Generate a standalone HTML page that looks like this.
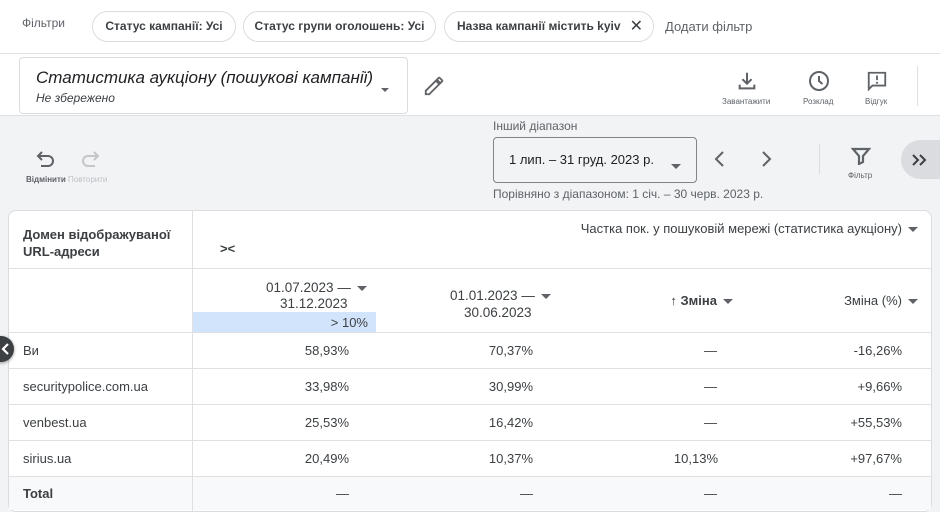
<!DOCTYPE html>
<html><head><meta charset="utf-8"><style>
*{margin:0;padding:0;box-sizing:border-box}
body{width:940px;height:511px;overflow:hidden;background:#f1f3f4;font-family:"Liberation Sans",Roboto,sans-serif;color:#3c4043;position:relative;font-size:13px}
.a{position:absolute;white-space:nowrap}
.chip{position:absolute;top:11px;height:31px;border:1px solid #dadce0;border-radius:16px;background:#fff;font-size:12px;font-weight:bold;color:#3c4043;line-height:29px;text-align:center;white-space:nowrap}
.r{text-align:right}
.line{position:absolute;background:#e0e0e0}
.tri{display:inline-block;width:0;height:0;border-left:5px solid transparent;border-right:5px solid transparent;border-top:5px solid #5f6368;vertical-align:middle;margin-left:6px}
</style></head><body>
<div class="a" style="left:0;top:0;width:940px;height:116px;background:#fff"></div>
<div class="line" style="left:0;top:53px;width:940px;height:1px"></div>
<div class="line" style="left:0;top:115px;width:940px;height:1px"></div>
<div class="a" style="left:22px;top:16px;font-size:12px;color:#5f6368">Фільтри</div>
<div class="chip" style="left:92px;width:144px">Статус кампанії: Усі</div>
<div class="chip" style="left:243px;width:193px">Статус групи оголошень: Усі</div>
<div class="chip" style="left:444px;width:210px;text-align:left;padding-left:12px">Назва кампанії містить kyiv <span style="font-weight:normal;font-size:16px;position:absolute;right:10px;top:0">✕</span></div>
<div class="a" style="left:665px;top:19px;color:#5f6368">Додати фільтр</div>

<div class="a" style="left:19px;top:57px;width:389px;height:57px;border:1px solid #dadce0;border-radius:4px;background:#fff"></div>
<div class="a" style="left:36px;top:68px;font-size:17px;font-style:italic;color:#202124">Статистика аукціону (пошукові кампанії)</div>
<div class="a" style="left:36px;top:91px;font-size:12px;font-style:italic;color:#3c4043">Не збережено</div>
<div class="a" style="left:381px;top:81px"><span class="tri" style="margin:0;border-width:4px 4px 0 4px"></span></div>
<svg class="a" style="left:423px;top:75px" width="22" height="22" viewBox="0 0 24 24"><path d="M3 17.25V21h3.75L17.8 9.94l-3.75-3.75L3 17.25zM20.7 7.04a1 1 0 000-1.41l-2.34-2.34a1 1 0 00-1.41 0l-1.830 1.83 3.75 3.75 1.83-1.83z" fill="none" stroke="#5f6368" stroke-width="2"/></svg>

<svg class="a" style="left:736px;top:70px" width="22" height="22" viewBox="0 0 24 24"><path d="M12 3v11M7 10l5 5 5-5M4 16v4h16v-4" fill="none" stroke="#5f6368" stroke-width="2.2"/></svg>
<div class="a" style="left:722px;top:97px;font-size:8px;color:#5f6368">Завантажити</div>
<svg class="a" style="left:807px;top:69px" width="24" height="24" viewBox="0 0 24 24"><circle cx="12" cy="12" r="9" fill="none" stroke="#5f6368" stroke-width="2"/><path d="M12 7v5l3.5 3" fill="none" stroke="#5f6368" stroke-width="2"/></svg>
<div class="a" style="left:803px;top:97px;font-size:8px;color:#5f6368">Розклад</div>
<svg class="a" style="left:866px;top:70px" width="22" height="22" viewBox="0 0 24 24"><path d="M3 3h18v14H7l-4 4z" fill="none" stroke="#5f6368" stroke-width="2"/><path d="M12 6v5M12 13v2" stroke="#5f6368" stroke-width="2"/></svg>
<div class="a" style="left:865px;top:97px;font-size:8px;color:#5f6368">Відгук</div>
<div class="line" style="left:917px;top:66px;width:1px;height:40px"></div>

<svg class="a" style="left:36px;top:150px" width="20" height="18" viewBox="0 0 20 18"><path d="M6 2L2 6l4 4M2 6h10a5 5 0 010 10H5" fill="none" stroke="#5f6368" stroke-width="2"/></svg>
<svg class="a" style="left:80px;top:150px" width="20" height="18" viewBox="0 0 20 18"><path d="M14 2l4 4-4 4M18 6H8a5 5 0 000 10h7" fill="none" stroke="#c4c7c9" stroke-width="2"/></svg>
<div class="a" style="left:26px;top:175px;font-size:8px;color:#5f6368;font-weight:bold">Відмінити <span style="color:#bdc1c6;font-weight:normal">Повторити</span></div>

<div class="a" style="left:493px;top:119px;font-size:12px;color:#5f6368">Інший діапазон</div>
<div class="a" style="left:493px;top:137px;width:204px;height:46px;border:1px solid #80868b;border-radius:4px"></div>
<div class="a" style="left:509px;top:152px;font-size:13px;color:#202124">1 лип. – 31 груд. 2023 р.</div>
<div class="a" style="left:671px;top:158px"><span class="tri" style="margin:0"></span></div>
<div class="a" style="left:493px;top:187px;font-size:12px;color:#5f6368">Порівняно з діапазоном: 1 січ. – 30 черв. 2023 р.</div>
<svg class="a" style="left:712px;top:150px" width="16" height="18" viewBox="0 0 16 18"><path d="M11 2L4 9l7 7" fill="none" stroke="#5f6368" stroke-width="2"/></svg>
<svg class="a" style="left:758px;top:150px" width="16" height="18" viewBox="0 0 16 18"><path d="M5 2l7 7-7 7" fill="none" stroke="#5f6368" stroke-width="2"/></svg>
<div class="line" style="left:819px;top:144px;width:1px;height:30px;background:#dadce0"></div>
<svg class="a" style="left:851px;top:147px" width="20" height="18" viewBox="0 0 20 18"><path d="M2 2h16l-6 7v6l-4 2V9z" fill="none" stroke="#5f6368" stroke-width="2.2"/></svg>
<div class="a" style="left:848px;top:171px;font-size:8px;color:#5f6368">Фільтр</div>
<div class="a" style="left:901px;top:140px;width:60px;height:39px;border-radius:20px;background:#dadce0"></div>
<svg class="a" style="left:911px;top:153px" width="16" height="14" viewBox="0 0 16 14"><path d="M2 2l5 5-5 5M9 2l5 5-5 5" fill="none" stroke="#3c4043" stroke-width="2"/></svg>

<div class="a" style="left:8px;top:210px;width:924px;height:302px;background:#fff;border:1px solid #dadce0;border-radius:8px"></div>
<div class="line" style="left:192px;top:210px;width:1px;height:301px"></div>
<div class="line" style="left:8px;top:268px;width:924px;height:1px"></div>
<div class="line" style="left:8px;top:332px;width:924px;height:1px"></div>
<div class="line" style="left:8px;top:368px;width:924px;height:1px"></div>
<div class="line" style="left:8px;top:404px;width:924px;height:1px"></div>
<div class="line" style="left:8px;top:440px;width:924px;height:1px"></div>
<div class="line" style="left:8px;top:476px;width:924px;height:1px"></div>
<div class="a" style="left:9px;top:477px;width:922px;height:33px;background:#f8f9fa"></div>
<div class="line" style="left:192px;top:476px;width:1px;height:35px"></div>

<div class="a" style="left:23px;top:226px;font-size:13px;font-weight:bold;color:#3c4043;line-height:17px">Домен відображуваної<br>URL-адреси</div>
<div class="a" style="left:220px;top:241px;font-size:13px;font-weight:bold">&gt;&lt;</div>
<div class="a r" style="right:22px;top:221px;font-size:13px">Частка пок. у пошуковій мережі (статистика аукціону)<span class="tri"></span></div>

<div class="a" style="left:193px;top:312px;width:183px;height:20px;background:#d2e3fc"></div>
<div class="a" style="left:266px;top:279px;line-height:17px;font-size:13.5px">01.07.2023 —<span class="tri"></span></div>
<div class="a" style="left:280px;top:296px;font-size:13.5px">31.12.2023</div>
<div class="a r" style="right:572px;top:315px;color:#3c4043">&gt; 10%</div>
<div class="a" style="left:450px;top:288px;font-size:13.5px">01.01.2023 —<span class="tri"></span></div>
<div class="a" style="left:464px;top:305px;font-size:13.5px">30.06.2023</div>
<div class="a r" style="right:207px;top:293px;font-weight:bold">↑ Зміна<span class="tri"></span></div>
<div class="a r" style="right:22px;top:293px">Зміна (%)<span class="tri"></span></div>

<div class="a" style="left:23px;top:343px">Ви</div>
<div class="a" style="left:23px;top:379px">securitypolice.com.ua</div>
<div class="a" style="left:23px;top:415px">venbest.ua</div>
<div class="a" style="left:23px;top:451px">sirius.ua</div>
<div class="a" style="left:23px;top:486px;font-weight:bold">Total</div>

<div class="a r" style="right:591px;top:343px">58,93%</div>
<div class="a r" style="right:591px;top:379px">33,98%</div>
<div class="a r" style="right:591px;top:415px">25,53%</div>
<div class="a r" style="right:591px;top:451px">20,49%</div>
<div class="a r" style="right:591px;top:486px">—</div>
<div class="a r" style="right:407px;top:343px">70,37%</div>
<div class="a r" style="right:407px;top:379px">30,99%</div>
<div class="a r" style="right:407px;top:415px">16,42%</div>
<div class="a r" style="right:407px;top:451px">10,37%</div>
<div class="a r" style="right:407px;top:486px">—</div>
<div class="a r" style="right:223px;top:343px">—</div>
<div class="a r" style="right:223px;top:379px">—</div>
<div class="a r" style="right:223px;top:415px">—</div>
<div class="a r" style="right:222px;top:451px">10,13%</div>
<div class="a r" style="right:223px;top:486px">—</div>
<div class="a r" style="right:38px;top:343px">-16,26%</div>
<div class="a r" style="right:38px;top:379px">+9,66%</div>
<div class="a r" style="right:38px;top:415px">+55,53%</div>
<div class="a r" style="right:38px;top:451px">+97,67%</div>
<div class="a r" style="right:38px;top:486px">—</div>

<div class="a" style="left:-12px;top:336px;width:26px;height:26px;border-radius:50%;background:#3c4043;box-shadow:0 1px 3px rgba(0,0,0,.4)"></div>
<svg class="a" style="left:0;top:342px" width="12" height="14" viewBox="0 0 12 14"><path d="M8 2L3 7l5 5" fill="none" stroke="#fff" stroke-width="2.2"/></svg>
</body></html>
